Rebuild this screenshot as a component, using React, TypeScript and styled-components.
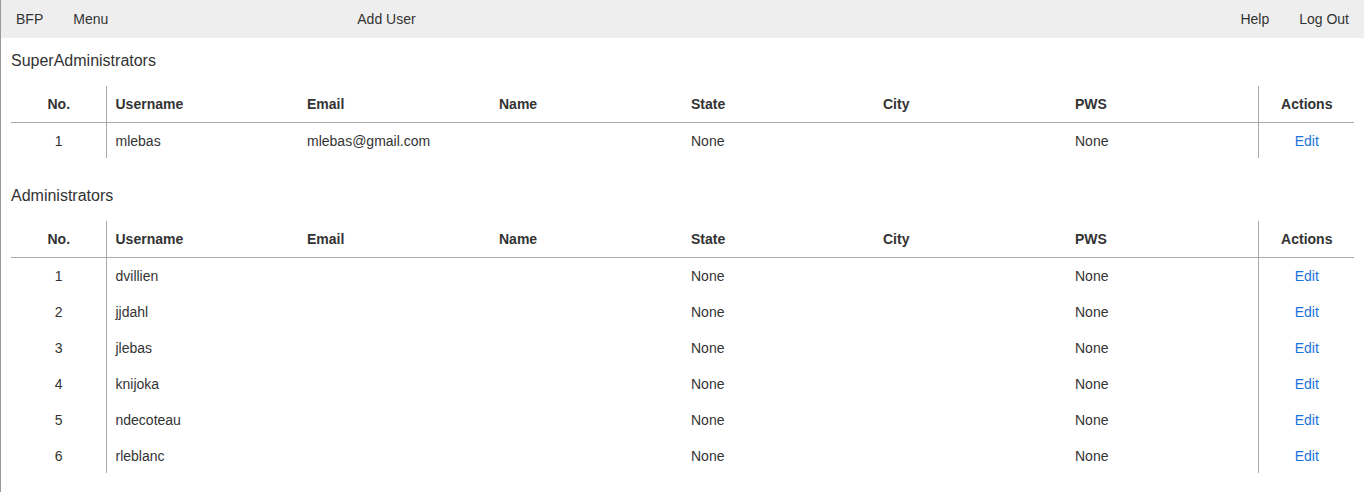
import React from "react";
import styled, { createGlobalStyle } from "styled-components";

const GlobalStyle = createGlobalStyle`
  html, body { margin: 0; padding: 0; background: #fff; }
  body { font-family: "Liberation Sans", Arial, sans-serif; color: #333; }
`;

const Page = styled.div`
  min-height: 492px;
  border-left: 1px solid #9a9a9a;
  box-sizing: border-box;
`;

const NavBar = styled.nav`
  display: flex;
  align-items: center;
  height: 38px;
  background: #eeeeee;
  padding: 0 15px 0 15px;
  font-size: 14px;
`;

const NavGroup = styled.div<{ $push?: boolean; $offset?: number }>`
  display: flex;
  align-items: center;
  gap: 30px;
  margin-left: ${(p) => (p.$push ? "auto" : `${p.$offset ?? 0}px`)};
`;

const NavLink = styled.a`
  color: #333;
  text-decoration: none;
  cursor: pointer;
`;

const Content = styled.main`
  padding: 0 10px 0 10px;
`;

const Section = styled.section`
  padding-top: 13px;
  margin-bottom: 15px;
`;

const SectionTitle = styled.h2`
  margin: 0 0 15px 0;
  font-size: 16px;
  font-weight: normal;
  line-height: 20px;
  color: #333;
`;

const Table = styled.table`
  width: 100%;
  border-collapse: collapse;
  table-layout: fixed;
  font-size: 14px;
`;

const HeadCell = styled.th<{ $align?: string; $sep?: "left" | "right" }>`
  height: 36px;
  padding: 0 8px 0 9px;
  font-weight: bold;
  text-align: ${(p) => p.$align ?? "left"};
  border-bottom: 1px solid #aaaaaa;
  ${(p) => (p.$sep === "right" ? "border-right: 1px solid #aaaaaa;" : "")}
  ${(p) => (p.$sep === "left" ? "border-left: 1px solid #aaaaaa;" : "")}
  box-sizing: border-box;
`;

const Cell = styled.td<{ $align?: string; $sep?: "left" | "right" }>`
  height: 36px;
  padding: 2px 8px 0 9px;
  text-align: ${(p) => p.$align ?? "left"};
  ${(p) => (p.$sep === "right" ? "border-right: 1px solid #aaaaaa;" : "")}
  ${(p) => (p.$sep === "left" ? "border-left: 1px solid #aaaaaa;" : "")}
  box-sizing: border-box;
`;

const EditLink = styled.a`
  color: #1a73d9;
  text-decoration: none;
  cursor: pointer;
`;

type User = {
  username: string;
  email: string;
  name: string;
  state: string;
  city: string;
  pws: string;
};

const superAdmins: User[] = [
  { username: "mlebas", email: "mlebas@gmail.com", name: "", state: "None", city: "", pws: "None" },
];

const admins: User[] = ["dvillien", "jjdahl", "jlebas", "knijoka", "ndecoteau", "rleblanc"].map((u) => ({
  username: u,
  email: "",
  name: "",
  state: "None",
  city: "",
  pws: "None",
}));

const UserTable: React.FC<{ users: User[] }> = ({ users }) => (
  <Table>
    <colgroup>
      <col style={{ width: 95 }} />
      <col style={{ width: 192 }} />
      <col style={{ width: 192 }} />
      <col style={{ width: 192 }} />
      <col style={{ width: 192 }} />
      <col style={{ width: 192 }} />
      <col style={{ width: 192 }} />
      <col />
    </colgroup>
    <thead>
      <tr>
        <HeadCell $align="center" $sep="right">No.</HeadCell>
        <HeadCell>Username</HeadCell>
        <HeadCell>Email</HeadCell>
        <HeadCell>Name</HeadCell>
        <HeadCell>State</HeadCell>
        <HeadCell>City</HeadCell>
        <HeadCell>PWS</HeadCell>
        <HeadCell $align="center" $sep="left">Actions</HeadCell>
      </tr>
    </thead>
    <tbody>
      {users.map((u, i) => (
        <tr key={u.username}>
          <Cell $align="center" $sep="right">{i + 1}</Cell>
          <Cell>{u.username}</Cell>
          <Cell>{u.email}</Cell>
          <Cell>{u.name}</Cell>
          <Cell>{u.state}</Cell>
          <Cell>{u.city}</Cell>
          <Cell>{u.pws}</Cell>
          <Cell $align="center" $sep="left">
            <EditLink>Edit</EditLink>
          </Cell>
        </tr>
      ))}
    </tbody>
  </Table>
);

export default function App() {
  return (
    <>
      <GlobalStyle />
      <Page>
        <NavBar>
          <NavGroup>
            <NavLink>BFP</NavLink>
            <NavLink>Menu</NavLink>
          </NavGroup>
          <NavGroup $offset={249}>
            <NavLink>Add User</NavLink>
          </NavGroup>
          <NavGroup $push>
            <NavLink>Help</NavLink>
            <NavLink>Log Out</NavLink>
          </NavGroup>
        </NavBar>
        <Content>
          <Section>
            <SectionTitle>SuperAdministrators</SectionTitle>
            <UserTable users={superAdmins} />
          </Section>
          <Section>
            <SectionTitle>Administrators</SectionTitle>
            <UserTable users={admins} />
          </Section>
        </Content>
      </Page>
    </>
  );
}
